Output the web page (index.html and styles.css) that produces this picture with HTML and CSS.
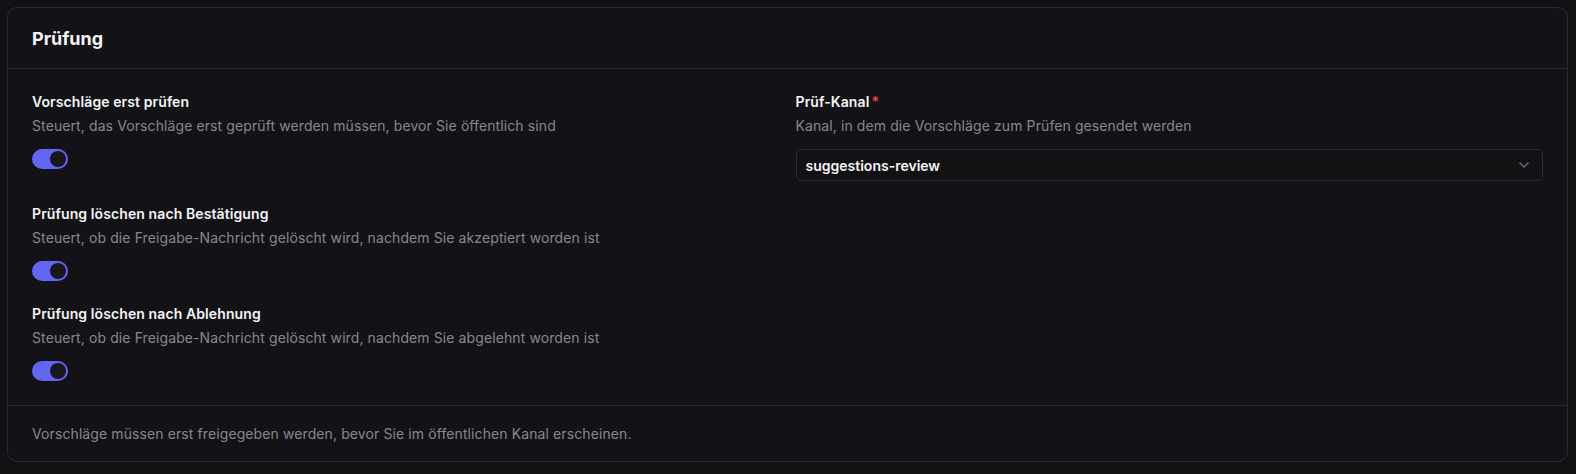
FILE: index.html
```html
<!DOCTYPE html>
<html lang="de">
<head>
<meta charset="utf-8">
<title>Prüfung</title>
<link rel="stylesheet" href="styles.css">
</head>
<body>
<section class="card">
  <header class="card-header">
    <h2 class="card-title">Prüfung</h2>
  </header>
  <div class="card-body">
    <div class="field">
      <div class="label">Vorschläge erst prüfen</div>
      <div class="desc">Steuert, das Vorschläge erst geprüft werden müssen, bevor Sie öffentlich sind</div>
      <div class="toggle on"><span class="knob"></span></div>
    </div>
    <div class="field">
      <div class="label">Prüf-Kanal<span class="req">*</span></div>
      <div class="desc">Kanal, in dem die Vorschläge zum Prüfen gesendet werden</div>
      <div class="select">
        <span class="select-value">suggestions-review</span>
        <svg class="chev" width="16" height="16" viewBox="0 0 16 16" fill="none"><path d="M4 6l4 4 4-4" stroke="currentColor" stroke-width="1.4" stroke-linecap="round" stroke-linejoin="round"/></svg>
      </div>
    </div>
    <div class="field">
      <div class="label">Prüfung löschen nach Bestätigung</div>
      <div class="desc">Steuert, ob die Freigabe-Nachricht gelöscht wird, nachdem Sie akzeptiert worden ist</div>
      <div class="toggle on"><span class="knob"></span></div>
    </div>
    <div class="spacer"></div>
    <div class="field">
      <div class="label">Prüfung löschen nach Ablehnung</div>
      <div class="desc">Steuert, ob die Freigabe-Nachricht gelöscht wird, nachdem Sie abgelehnt worden ist</div>
      <div class="toggle on"><span class="knob"></span></div>
    </div>
  </div>
  <footer class="card-footer">Vorschläge müssen erst freigegeben werden, bevor Sie im öffentlichen Kanal erscheinen.</footer>
</section>
</body>
</html>
```

FILE: styles.css
```css
html, body {
  margin: 0;
  background: #111113;
}
body {
  padding: 7px 8px 8px 7px;
  font-family: Inter, "Noto Sans", sans-serif;
  color: #f2f2f4;
}
.card {
  background: #131317;
  border: 1px solid #2a2a30;
  border-radius: 10px;
}
.card-header {
  height: 60px;
  display: flex;
  align-items: center;
  padding: 0 24px;
  border-bottom: 1px solid #2a2a30;
}
.card-title {
  margin: 0;
  font-size: 18px;
  font-weight: 700;
  color: #f4f4f6;
}
.card-body {
  display: grid;
  grid-template-columns: 1fr 1fr;
  column-gap: 16px;
  row-gap: 23px;
  align-items: start;
  padding: 23px 24px 24px;
  border-bottom: 1px solid #2a2a30;
}
.field {
  display: flex;
  flex-direction: column;
}
.label {
  font-size: 14px;
  line-height: 20px;
  font-weight: 600;
  color: #f4f4f6;
  letter-spacing: 0.1px;
}
.req {
  color: #ef4444;
  margin-left: 2px;
}
.desc {
  margin-top: 4px;
  font-size: 14px;
  line-height: 20px;
  color: #858892;
  letter-spacing: 0.1px;
}
.toggle {
  margin-top: 13px;
  width: 36px;
  height: 20px;
  border-radius: 10px;
  background: #6366f1;
  position: relative;
  box-sizing: border-box;
}
.knob {
  position: absolute;
  top: 2px;
  right: 2px;
  width: 16px;
  height: 16px;
  border-radius: 50%;
  background: #18181c;
}
.select {
  margin-top: 13px;
  height: 32px;
  box-sizing: border-box;
  border: 1px solid #2d2d33;
  border-radius: 6px;
  background: #121215;
  display: flex;
  align-items: center;
  justify-content: space-between;
  padding: 0 10px 0 9px;
}
.select-value {
  font-size: 14px;
  font-weight: 600;
  color: #f4f4f6;
}
.chev {
  color: #6b6b74;
}
.card-footer {
  padding: 18px 24px 17px;
  font-size: 14px;
  line-height: 20px;
  color: #858892;
  letter-spacing: 0.1px;
}
```
